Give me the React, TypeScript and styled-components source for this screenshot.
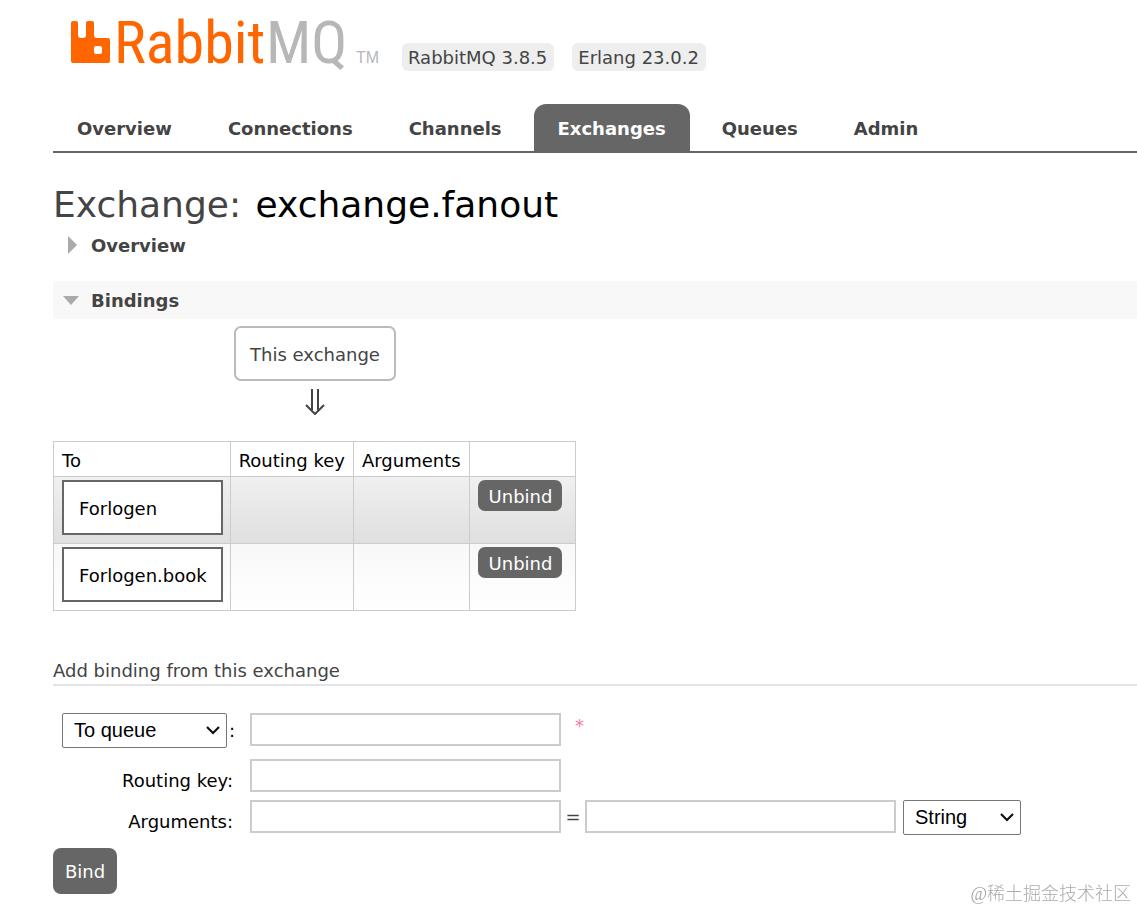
import React from "react";
import styled, { createGlobalStyle } from "styled-components";

const GlobalStyle = createGlobalStyle`
  * { box-sizing: border-box; }
  body {
    margin: 0;
    background: #fff;
    color: #444;
    font: 18px/22px "DejaVu Sans", Verdana, sans-serif;
  }
`;

const Page = styled.div`
  padding: 16px 0 16px 53px;
`;

const Header = styled.header`
  display: flex;
  align-items: flex-start;
  height: 88px;
  padding-left: 18px;
`;

const Logo = styled.a`
  display: flex;
  width: 308px;
  margin-right: 23px;
  text-decoration: none;
`;

const LogoDrawing = styled.svg`
  display: block;
  overflow: visible;
  font-family: "Roboto Condensed", "Open Sans Condensed", "Noto Sans Condensed", Lato, sans-serif;
`;

const Versions = styled.ul`
  display: flex;
  gap: 18px;
  margin: 27px 0 0;
  padding: 0;
  list-style: none;
`;

const Version = styled.li`
  padding: 4px 7px 2px 6px;
  border-radius: 6px;
  background: #eee;
  white-space: nowrap;
`;

const Tabs = styled.nav`
  display: flex;
  gap: 8px;
  border-bottom: 2px solid #666;
`;

const Tab = styled.a<{ $active?: boolean }>`
  padding: 14px 24px 11px;
  border-radius: 12px 12px 0 0;
  background: ${(p) => (p.$active ? "#666" : "transparent")};
  color: ${(p) => (p.$active ? "#fff" : "#444")};
  font-weight: bold;
  text-decoration: none;
`;

const Title = styled.h1`
  margin: 31px 0 1px;
  font-size: 36px;
  font-weight: normal;
  line-height: 42px;
  b {
    margin-left: 3px;
    color: #000;
    font-weight: normal;
  }
`;

const SectionTitle = styled.h2<{ $open?: boolean }>`
  display: flex;
  align-items: center;
  height: 38px;
  margin: 0 0 ${(p) => (p.$open ? "7px" : "16px")};
  padding: ${(p) => (p.$open ? "2px" : "0")} 0 0 9px;
  background: ${(p) => (p.$open ? "#f8f8f8" : "transparent")};
  font-size: 18px;
`;

const Toggle = styled.button`
  display: flex;
  align-items: center;
  gap: 11px;
  padding: 0;
  border: 0;
  background: none;
  color: inherit;
  font: inherit;
`;

const Flow = styled.div`
  display: flex;
  flex-direction: column;
  align-items: center;
  width: 524px;
`;

const ExchangeBox = styled.span`
  padding: 16px 14px 13px;
  border: 2px solid #bbb;
  border-radius: 7px;
`;

const FlowArrow = styled.svg`
  margin: 8px 0 26px;
`;

const BindingTable = styled.table`
  border-collapse: collapse;
  color: #000;
  th,
  td {
    padding: 3px 7px 8px 8px;
    border: 1px solid #ccc;
    text-align: left;
    vertical-align: top;
    font-weight: normal;
  }
  th {
    padding: 8px 8px 4px;
  }
  th:last-child {
    width: 106px;
  }
  tbody tr:nth-child(odd) {
    background: linear-gradient(#f0f0f0, #dfdfdf);
  }
  tbody tr:nth-child(even) {
    background: linear-gradient(#f8f8f8, #fff);
  }
`;

const QueueLink = styled.a`
  display: block;
  padding: 16px 14px 13px 15px;
  border: 2px solid #666;
  background: #fff;
  color: #000;
  text-decoration: none;
`;

const Button = styled.button<{ $large?: boolean }>`
  display: block;
  padding: ${(p) => (p.$large ? "13px 12px 11px" : "6px 10px 3px 11px")};
  border: 0;
  border-radius: ${(p) => (p.$large ? "8px" : "7px")};
  background: #666;
  color: #fff;
  font: inherit;
`;

const FormTitle = styled.h3`
  margin: 49px 0 27px;
  padding-bottom: 2px;
  border-bottom: 2px solid #e4e4e4;
  font-size: 18px;
  font-weight: normal;
`;

const FormGrid = styled.div`
  display: grid;
  grid-template-columns: 173px 1fr;
  column-gap: 15px;
  padding-left: 9px;
  margin-bottom: 13px;
`;

const LabelCell = styled.div`
  display: flex;
  align-items: center;
  justify-content: space-between;
  height: 35px;
  color: #000;
`;

const LowLabelCell = styled(LabelCell)`
  align-items: flex-end;
  justify-content: flex-end;
  height: 33px;
  padding-right: 2px;
`;

const FieldCell = styled.div<{ $gap?: number }>`
  display: flex;
  align-items: flex-start;
  margin-bottom: ${(p) => p.$gap ?? 0}px;
`;

const TextInput = styled.input`
  width: 311px;
  height: 33px;
  padding: 4px;
  border: 2px solid #ccc;
  background: #fff;
  font: inherit;
`;

const Required = styled.span`
  margin: 2px 0 0 14px;
  color: #f58;
  opacity: 0.8;
`;

const Equals = styled.span`
  width: 24px;
  padding-top: 6px;
  text-align: center;
`;

const SelectFrame = styled.span<{ $width: number }>`
  position: relative;
  display: block;
  width: ${(p) => p.$width}px;
  svg {
    position: absolute;
    top: 13px;
    right: 7px;
    pointer-events: none;
  }
`;

const NativeSelect = styled.select`
  display: block;
  width: 100%;
  height: 35px;
  padding: 0 11px 2px;
  border: 1px solid #767676;
  border-radius: 2px;
  appearance: none;
  background: #fff;
  color: #000;
  font: 20px "Liberation Sans", Arial, sans-serif;
`;

const TypeSelectSlot = styled.div`
  margin-left: 7px;
`;

const Watermark = styled.div`
  position: fixed;
  right: 6px;
  bottom: 4px;
  color: #aaa;
  font: 300 18px/24px "Liberation Serif", "Noto Sans CJK SC", serif;
`;

function Select(props: { label: string; width: number; options: string[] }) {
  return (
    <SelectFrame $width={props.width}>
      <NativeSelect aria-label={props.label}>
        {props.options.map((o) => (
          <option key={o}>{o}</option>
        ))}
      </NativeSelect>
      <svg width="14" height="9" viewBox="0 0 14 9" fill="none" stroke="#111" strokeWidth="2.2">
        <path d="M1 1 L7 7 L13 1" />
      </svg>
    </SelectFrame>
  );
}

const tabs = ["Overview", "Connections", "Channels", "Exchanges", "Queues", "Admin"];
const bindings = ["Forlogen", "Forlogen.book"];

export default function App() {
  return (
    <>
      <GlobalStyle />
      <Page>
        <Header>
          <Logo href="#" aria-label="RabbitMQ">
            <LogoDrawing width="308" height="56" viewBox="0 0 308 56">
              <path
                fill="#f60"
                fillRule="evenodd"
                d="M2 5H5Q7 5 7 7V19Q7 22 10 22H12Q15 22 15 19V7Q15 5 17 5H21Q23 5 23 7V19Q23 22 26 22H37Q39 22 39 24V45Q39 47 37 47H2Q0 47 0 45V7Q0 5 2 5ZM25 30Q23 30 23 32V36Q23 38 25 38H29Q31 38 31 36V32Q31 30 29 30Z"
              />
              <text x="43" y="47" fontSize="60" fill="#f60">Rabbit</text>
              <text x="195" y="47" fontSize="60" fill="#b7b7b7">MQ</text>
              <text x="285" y="47" fontSize="16" fill="#b7b7b7" fontFamily="Liberation Sans">TM</text>
            </LogoDrawing>
          </Logo>
          <Versions>
            <Version>RabbitMQ 3.8.5</Version>
            <Version>Erlang 23.0.2</Version>
          </Versions>
        </Header>
        <Tabs>
          {tabs.map((t) => (
            <Tab key={t} href="#" $active={t === "Exchanges"}>
              {t}
            </Tab>
          ))}
        </Tabs>
        <main>
          <Title>
            Exchange: <b>exchange.fanout</b>
          </Title>
          <SectionTitle>
            <Toggle type="button" aria-expanded="false">
              <svg width="18" height="22" viewBox="0 0 18 22">
                <path fill="#aaa" d="M6 1 L15 10 L6 19Z" />
              </svg>
              Overview
            </Toggle>
          </SectionTitle>
          <SectionTitle $open>
            <Toggle type="button" aria-expanded="true">
              <svg width="18" height="22" viewBox="0 0 18 22">
                <path fill="#aaa" d="M1 6 H17 L9 15Z" />
              </svg>
              Bindings
            </Toggle>
          </SectionTitle>
          <Flow>
            <ExchangeBox>This exchange</ExchangeBox>
            <FlowArrow width="20" height="26" viewBox="0 0 20 26" fill="none" stroke="#444" strokeWidth="2">
              <path d="M7 0V21M13 0V21M1 16L10 25L19 16" />
            </FlowArrow>
          </Flow>
          <BindingTable>
            <thead>
              <tr>
                <th scope="col">To</th>
                <th scope="col">Routing key</th>
                <th scope="col">Arguments</th>
                <th />
              </tr>
            </thead>
            <tbody>
              {bindings.map((name) => (
                <tr key={name}>
                  <td>
                    <QueueLink href="#">{name}</QueueLink>
                  </td>
                  <td />
                  <td />
                  <td>
                    <Button type="button">Unbind</Button>
                  </td>
                </tr>
              ))}
            </tbody>
          </BindingTable>
          <FormTitle>Add binding from this exchange</FormTitle>
          <form onSubmit={(e) => e.preventDefault()}>
            <FormGrid>
              <LabelCell>
                <Select label="Destination type" width={165} options={["To queue", "To exchange"]} />
                <label htmlFor="destination">:</label>
              </LabelCell>
              <FieldCell $gap={13}>
                <TextInput id="destination" />
                <Required>*</Required>
              </FieldCell>
              <LowLabelCell>
                <label htmlFor="routing-key">Routing key:</label>
              </LowLabelCell>
              <FieldCell $gap={8}>
                <TextInput id="routing-key" />
              </FieldCell>
              <LowLabelCell>
                <label htmlFor="arguments">Arguments:</label>
              </LowLabelCell>
              <FieldCell>
                <TextInput id="arguments" />
                <Equals>=</Equals>
                <TextInput aria-label="Argument value" />
                <TypeSelectSlot>
                  <Select label="Argument type" width={118} options={["String", "Number", "Boolean", "List"]} />
                </TypeSelectSlot>
              </FieldCell>
            </FormGrid>
            <Button type="submit" $large>
              Bind
            </Button>
          </form>
        </main>
        <Watermark>@稀土掘金技术社区</Watermark>
      </Page>
    </>
  );
}
